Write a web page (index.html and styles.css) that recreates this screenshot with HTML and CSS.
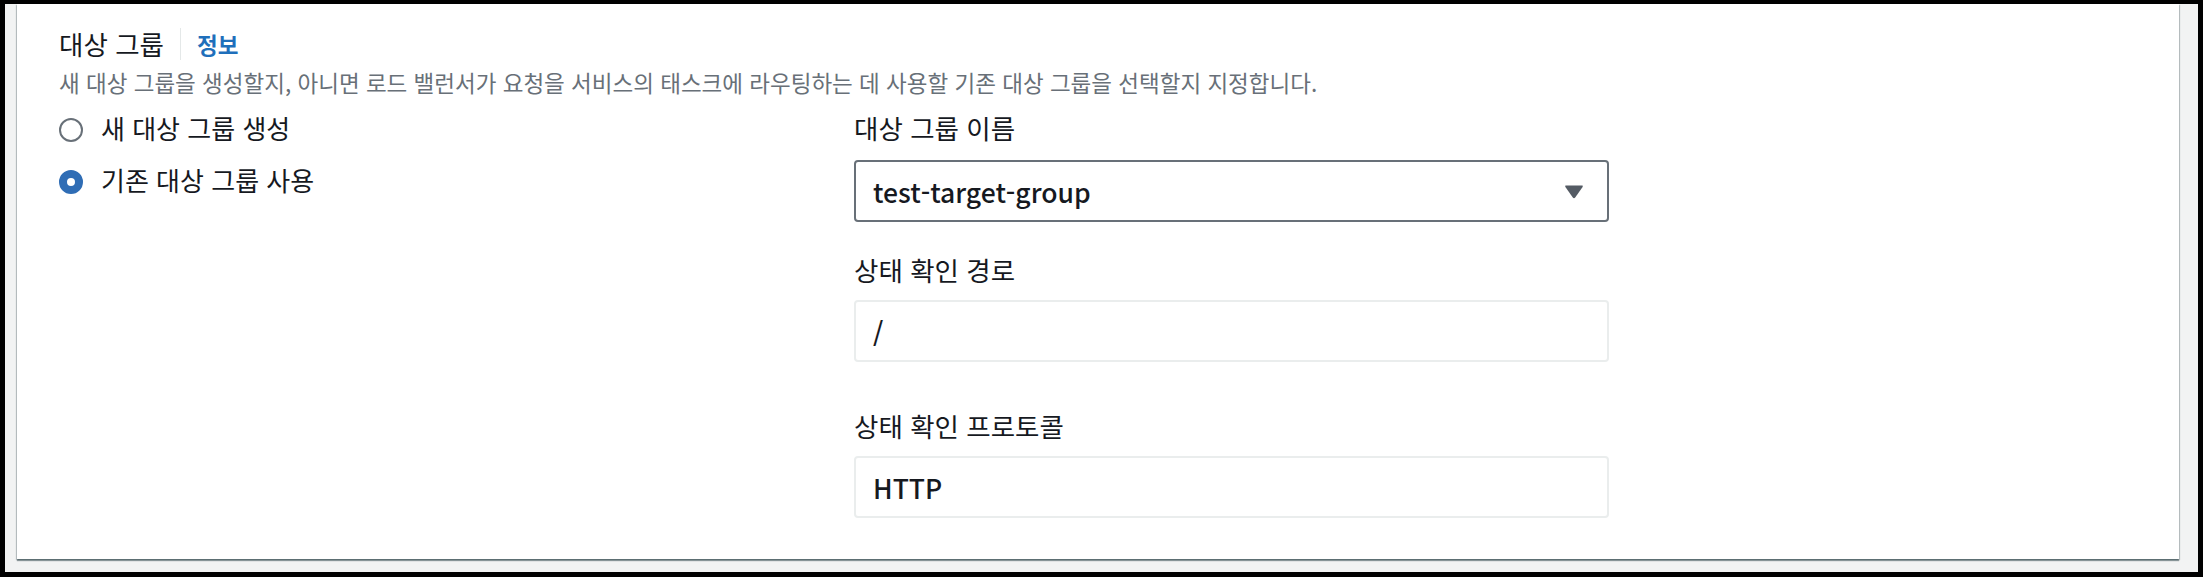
FILE: index.html
```html
<!DOCTYPE html>
<html lang="ko">
<head>
  <meta charset="utf-8">
  <title>대상 그룹</title>
  <link rel="stylesheet" href="styles.css">
</head>
<body>
  <div class="frame">
    <div class="card">
      <div class="header">
        <span class="title">대상 그룹</span>
        <span class="sep"></span>
        <a class="info" href="#">정보</a>
      </div>
      <div class="desc">새 대상 그룹을 생성할지, 아니면 로드 밸런서가 요청을 서비스의 태스크에 라우팅하는 데 사용할 기존 대상 그룹을 선택할지 지정합니다.</div>
      <div class="body">
        <div class="radios">
          <label class="radio"><span class="dot"></span>새 대상 그룹 생성</label>
          <label class="radio"><span class="dot checked"></span>기존 대상 그룹 사용</label>
        </div>
        <div class="fields">
          <div class="label">대상 그룹 이름</div>
          <div class="select">
            <span>test-target-group</span>
            <svg class="caret" width="20" height="15" viewBox="0 0 20 15"><path d="M2 1.5 L18 1.5 Q19.5 1.5 18.6 2.9 L11.2 13.6 Q10 15 8.8 13.6 L1.4 2.9 Q0.5 1.5 2 1.5 Z" fill="#545b64"/></svg>
          </div>
          <div class="label second">상태 확인 경로</div>
          <div class="input">/</div>
          <div class="label third">상태 확인 프로토콜</div>
          <div class="input">HTTP</div>
        </div>
      </div>
    </div>
  </div>
</body>
</html>
```

FILE: styles.css
```css
body {
  margin: 0;
  font-family: "Noto Sans CJK KR", "Noto Sans", sans-serif;
  color: #16191f;
}
.frame {
  box-sizing: border-box;
  width: 2203px;
  height: 577px;
  border: solid #000;
  border-width: 4px 5px 5px 5px;
  background-color: #f2f3f3;
  padding: 0 19px 11px 12px;
}
.card {
  box-sizing: border-box;
  height: 555px;
  background: #fff;
  padding: 24px 0 0 42px;
  box-shadow: 0 2px 1px 0 rgba(0, 28, 36, .4), -1px 1px 1px 0 rgba(0, 28, 36, .2), 1px 1px 1px 0 rgba(0, 28, 36, .2);
}
.header {
  display: flex;
  align-items: center;
  height: 32px;
}
.title {
  font-size: 26.5px;
  line-height: 32px;
}
.sep {
  width: 1px;
  height: 32px;
  background: #e4e8e8;
  margin: 0 16px 0 16px;
}
.info {
  font-size: 22.5px;
  font-weight: bold;
  color: #1f6fbb;
  text-decoration: none;
}
.desc {
  margin-top: 8px;
  font-size: 22.5px;
  line-height: 28px;
  color: #687078;
}
.body {
  display: grid;
  grid-template-columns: 795px 755px;
  margin-top: 16px;
}
.radios {
  display: flex;
  flex-direction: column;
  gap: 20px;
}
.radio {
  display: flex;
  align-items: center;
  font-size: 26px;
  line-height: 32px;
}
.dot {
  box-sizing: border-box;
  width: 24px;
  height: 24px;
  border-radius: 50%;
  border: 2px solid #687078;
  margin: 4px 18px 0 0;
}
.dot.checked {
  border: 8px solid #2f6db5;
}
.label {
  font-size: 26.5px;
  line-height: 32px;
}
.label.second { margin-top: 32px; }
.label.third { margin-top: 48px; }
.select, .input {
  box-sizing: border-box;
  height: 62px;
  border-radius: 4px;
  display: flex;
  align-items: center;
  padding: 0 23px 0 17px;
  font-size: 26.5px;
  font-weight: 500;
}
.select {
  margin-top: 16px;
  border: 2px solid #687078;
  justify-content: space-between;
}
.input {
  margin-top: 14px;
  border: 2px solid #eaeded;
}
```
